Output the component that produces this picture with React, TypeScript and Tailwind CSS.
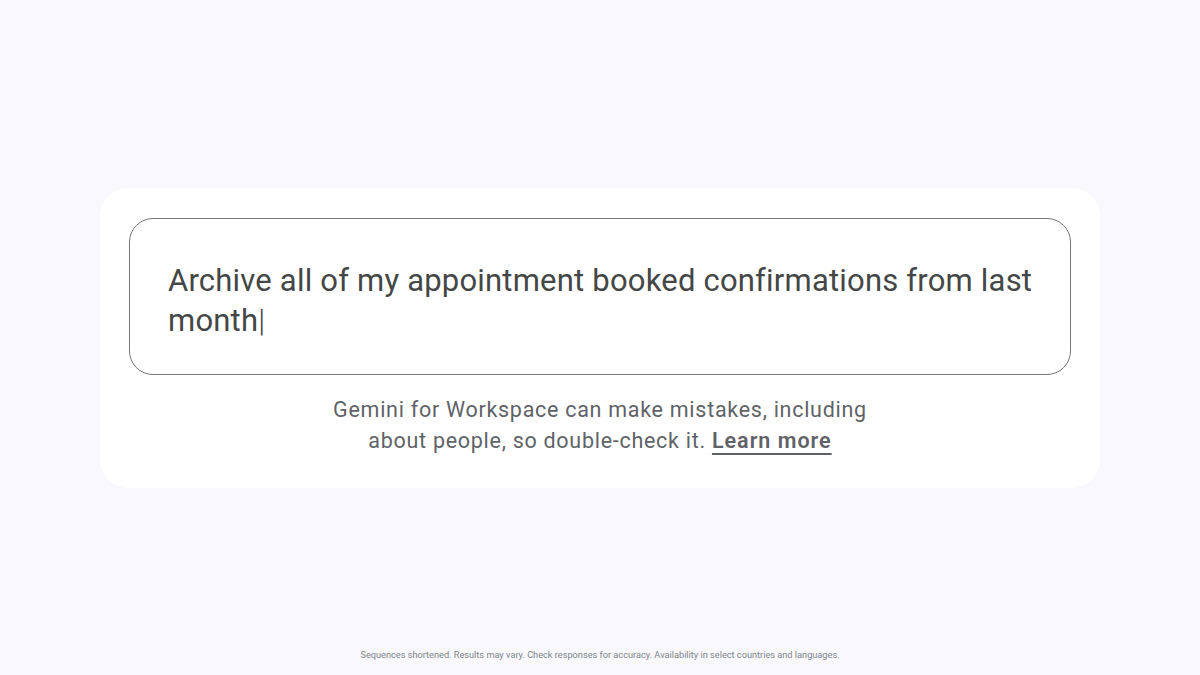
export default function App() {
  return (
    <div
      className="w-[1200px] h-[675px] bg-[#f8f8fd] flex flex-col items-center"
      style={{ fontFamily: 'Roboto, "Noto Sans", sans-serif' }}
    >
      <div className="mt-[188px] w-[1000px] h-[300px] bg-white rounded-[28px] px-[29px] pt-[30px]">
        <div className="h-[157px] border border-[#747775] rounded-[24px] pl-[38px] pr-[20px] pt-[42px]">
          <p className="text-[31px] leading-[40px] text-[#444746] tracking-[0.2px]">
            Archive all of my appointment booked confirmations from last month
            <span className="font-light">|</span>
          </p>
        </div>
        <p className="mt-[19px] text-center text-[21.5px] leading-[31px] text-[#5f6368] tracking-[0.72px] w-[560px] mx-auto">
          Gemini for Workspace can make mistakes, including about people, so double-check it.{' '}
          <span className="font-semibold tracking-[1px] underline underline-offset-[5px] decoration-[1.5px]">Learn more</span>
        </p>
      </div>
      <p className="mt-auto mb-[13px] text-[9.2px] text-[#80868b]">
        Sequences shortened. Results may vary. Check responses for accuracy. Availability in select countries and languages.
      </p>
    </div>
  );
}
